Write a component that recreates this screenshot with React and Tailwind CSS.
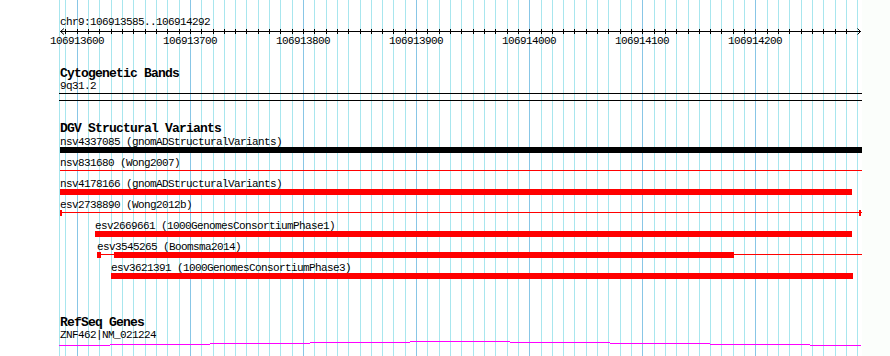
import React from "react";

const GRID = Array.from({ length: 71 }, (_, i) => ({
  k: i - 1,
  x: Math.floor(77.3 + 11.31 * (i - 1)),
}));

const TICKS = GRID.filter((g) => g.k <= 68);

const LABELS = [0, 10, 20, 30, 40, 50, 60].map((k, i) => ({
  x: Math.floor(77.3 + 11.31 * k),
  text: String(106913600 + i * 100),
}));

const ROWS = [
  { label: "nsv4337085 (gnomADStructuralVariants)", left: 60, parts: [{ kind: "bar", l: 60, r: 862, color: "#000000" }] },
  { label: "nsv831680 (Wong2007)", left: 60, parts: [{ kind: "line", l: 60, r: 862, color: "#ff0000" }] },
  { label: "nsv4178166 (gnomADStructuralVariants)", left: 60, parts: [{ kind: "bar", l: 60, r: 852, color: "#ff0000" }] },
  {
    label: "esv2738890 (Wong2012b)",
    left: 60,
    parts: [
      { kind: "line", l: 60, r: 862, color: "#ff0000" },
      { kind: "bar", l: 60, r: 62, color: "#ff0000" },
      { kind: "bar", l: 859, r: 861, color: "#ff0000" },
    ],
  },
  { label: "esv2669661 (1000GenomesConsortiumPhase1)", left: 95, parts: [{ kind: "bar", l: 95, r: 852, color: "#ff0000" }] },
  {
    label: "esv3545265 (Boomsma2014)",
    left: 97,
    parts: [
      { kind: "bar", l: 97, r: 101, color: "#ff0000" },
      { kind: "line", l: 101, r: 862, color: "#ff0000" },
      { kind: "bar", l: 114, r: 734, color: "#ff0000" },
    ],
  },
  { label: "esv3621391 (1000GenomesConsortiumPhase3)", left: 111, parts: [{ kind: "bar", l: 111, r: 853, color: "#ff0000" }] },
];

const GENE = [
  [59, 110, 5],
  [110, 210, 4],
  [210, 310, 3],
  [310, 410, 2],
  [410, 510, 1],
  [510, 610, 2],
  [610, 710, 3],
  [710, 810, 4],
  [810, 861, 5],
];

const small = "font-['Liberation_Mono','DejaVu_Sans_Mono',monospace] text-[11px] leading-[12px] tracking-[-0.6px] text-black whitespace-pre";
const bold = "font-['Liberation_Mono','DejaVu_Sans_Mono',monospace] font-bold text-[13px] tracking-[-0.8px] text-black whitespace-pre";

export default function App() {
  return (
    <div className="w-[890px] h-[356px] bg-[#fbfefb] overflow-hidden">
      <div className="relative w-[862px] h-[356px] bg-white">
        <svg className="absolute inset-0" width="862" height="356" shapeRendering="crispEdges">
          <line x1="59.5" y1="0" x2="59.5" y2="356" stroke="#a8e6ee" strokeWidth="1" />
          {GRID.map((g) => (
            <line
              key={g.k}
              x1={g.x + 0.5}
              y1="0"
              x2={g.x + 0.5}
              y2="356"
              stroke={g.k % 10 === 0 ? "#88c6e6" : "#a8e6ee"}
              strokeWidth="1"
            />
          ))}
        </svg>

        <div className="relative flex flex-col">
          <div className={`mt-[16px] h-[12px] pl-[60px] ${small}`}>chr9:106913585..106914292</div>

          <svg className="block" width="862" height="7" shapeRendering="crispEdges">
            <line x1="60" y1="3.5" x2="861" y2="3.5" stroke="#000" strokeWidth="1" />
            {TICKS.map((t) => (
              <line key={t.k} x1={t.x + 0.5} y1="1" x2={t.x + 0.5} y2="6" stroke="#000" strokeWidth="1" />
            ))}
            <polyline points="64,0.5 60.5,3.5 64,6.5" fill="none" stroke="#000" strokeWidth="1" shapeRendering="auto" />
            <polyline points="857.5,0.5 860.5,3.5 857.5,6.5" fill="none" stroke="#000" strokeWidth="1" shapeRendering="auto" />
          </svg>

          <div className="relative h-[12px]">
            {LABELS.map((l) => (
              <div key={l.text} className={`absolute top-0 ${small}`} style={{ left: l.x - 27 }}>
                {l.text}
              </div>
            ))}
          </div>

          <div className={`mt-[21px] h-[12px] leading-[12px] pl-[60px] ${bold}`}>Cytogenetic Bands</div>
          <div className={`h-[12px] pl-[60px] ${small}`}>9q31.2</div>
          <div className="mt-[1px] ml-[59px] w-[803px] h-[8px] border-y border-black" />

          <div className={`mt-[21px] h-[14px] leading-[14px] pl-[60px] ${bold}`}>DGV Structural Variants</div>
          {ROWS.map((row) => (
            <div key={row.label} className="h-[21px] flex flex-col">
              <div className={`h-[11px] ${small}`} style={{ paddingLeft: row.left }}>
                {row.label}
              </div>
              <div className="relative h-[10px]">
                {row.parts.map((p, i) =>
                  p.kind === "bar" ? (
                    <div
                      key={i}
                      className="absolute top-0 h-[6px]"
                      style={{ left: p.l, width: p.r - p.l, background: p.color }}
                    />
                  ) : (
                    <div
                      key={i}
                      className="absolute top-[2px] h-[1px]"
                      style={{ left: p.l, width: p.r - p.l, background: p.color }}
                    />
                  )
                )}
              </div>
            </div>
          ))}

          <div className={`mt-[34px] h-[12px] leading-[12px] pl-[60px] ${bold}`}>RefSeq Genes</div>
          <div className={`h-[11px] leading-[11px] pl-[60px] ${small}`}>ZNF462|NM_021224</div>
          <svg className="block" width="862" height="7" shapeRendering="crispEdges">
            {GENE.map(([a, b, y], i) => (
              <line key={i} x1={a} y1={y + 0.5} x2={b} y2={y + 0.5} stroke="#ff00ff" strokeWidth="1" />
            ))}
          </svg>
        </div>
      </div>
    </div>
  );
}
